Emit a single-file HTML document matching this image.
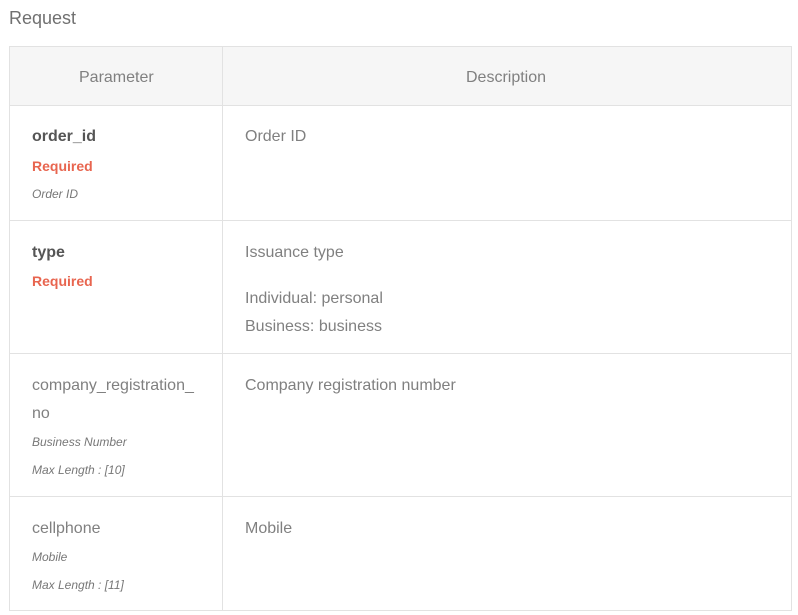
<!DOCTYPE html>
<html><head><style>
body{margin:0;width:798px;height:615px;background:#fff;font-family:"Liberation Sans",sans-serif;color:#777;position:relative;overflow:hidden}
.a{position:absolute;white-space:nowrap}
.h{position:absolute;background:#e2e2e2}
.t{font-size:16px;color:#808080}
.b{font-size:16px;font-weight:bold;color:#555}
.r{font-size:14px;font-weight:bold;color:#e8654f}
.i{font-size:12px;font-style:italic;color:#777}
</style></head><body>
<div class="a" style="left:9px;top:8px;font-size:18px;color:#707070">Request</div>
<div style="position:absolute;left:9px;top:46px;width:782px;height:59px;background:#f6f6f6"></div>
<div class="h" style="left:9px;top:46px;width:783px;height:1px"></div>
<div class="h" style="left:9px;top:105px;width:783px;height:1px"></div>
<div class="h" style="left:9px;top:220px;width:783px;height:1px"></div>
<div class="h" style="left:9px;top:353px;width:783px;height:1px"></div>
<div class="h" style="left:9px;top:496px;width:783px;height:1px"></div>
<div class="h" style="left:9px;top:610px;width:783px;height:1px"></div>
<div class="h" style="left:9px;top:46px;width:1px;height:565px"></div>
<div class="h" style="left:222px;top:46px;width:1px;height:565px"></div>
<div class="h" style="left:791px;top:46px;width:1px;height:565px"></div>
<div class="a t" style="left:79px;top:69px">Parameter</div>
<div class="a t" style="left:466px;top:69px">Description</div>

<div class="a b" style="left:32px;top:128px">order_id</div>
<div class="a r" style="left:32px;top:158px">Required</div>
<div class="a i" style="left:32px;top:187px">Order ID</div>
<div class="a t" style="left:245px;top:128px">Order ID</div>

<div class="a b" style="left:32px;top:244px">type</div>
<div class="a r" style="left:32px;top:273px">Required</div>
<div class="a t" style="left:245px;top:244px">Issuance type</div>
<div class="a t" style="left:245px;top:290px">Individual: personal</div>
<div class="a t" style="left:245px;top:318px">Business: business</div>

<div class="a t" style="left:32px;top:377px">company_registration_</div>
<div class="a t" style="left:32px;top:405px">no</div>
<div class="a i" style="left:32px;top:435px">Business Number</div>
<div class="a i" style="left:32px;top:463px">Max Length : [10]</div>
<div class="a t" style="left:245px;top:377px">Company registration number</div>

<div class="a t" style="left:32px;top:520px">cellphone</div>
<div class="a i" style="left:32px;top:550px">Mobile</div>
<div class="a i" style="left:32px;top:578px">Max Length : [11]</div>
<div class="a t" style="left:245px;top:520px">Mobile</div>
</body></html>
